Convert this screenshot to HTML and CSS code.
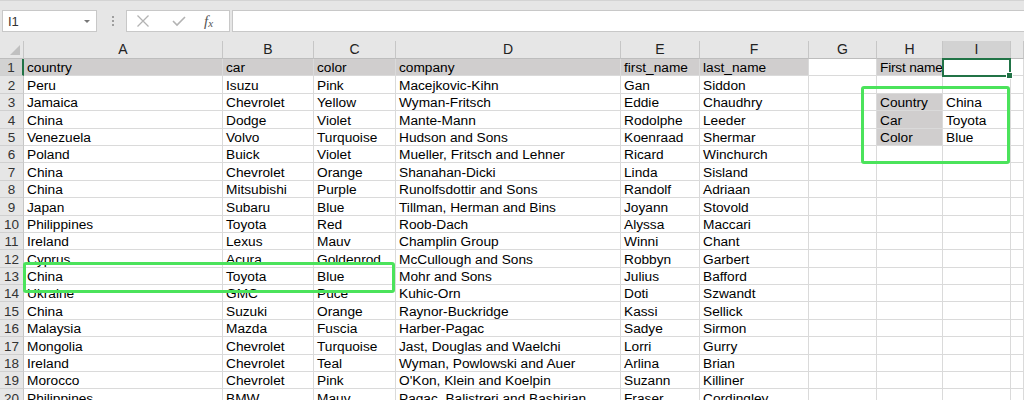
FILE: index.html
```html
<!DOCTYPE html>
<html>
<head>
<meta charset="utf-8">
<link rel="stylesheet" href="styles.css">
</head>
<body>
<div class="app">
  <div class="toolbar">
    <div class="namebox"><span class="ref">I1</span><span class="arrow"></span></div>
    <div class="grip"><i></i><i></i><i></i></div>
    <div class="fxbox">
      <svg class="ico ico-x" width="14" height="14" viewBox="0 0 14 14"><path d="M1.5 1.5 L12.5 12.5 M12.5 1.5 L1.5 12.5" stroke="#b3b3b3" stroke-width="1.3" fill="none"/></svg>
      <svg class="ico ico-ok" width="16" height="14" viewBox="0 0 16 14"><path d="M2 7 L6 11 L14 3" stroke="#b3b3b3" stroke-width="1.6" fill="none"/></svg>
      <span class="fx">f<sub>x</sub></span>
    </div>
    <div class="formula"></div>
  </div>

  <div class="sheet">
    <div class="row head">
      <div class="rh corner"><span class="tri"></span></div>
      <div class="ch">A</div><div class="ch">B</div><div class="ch">C</div><div class="ch">D</div><div class="ch">E</div><div class="ch">F</div><div class="ch">G</div><div class="ch">H</div><div class="ch sel">I</div><div class="ch"></div>
    </div>
    <div class="row">
      <div class="rh selrow">1</div>
      <div class="c g">country</div><div class="c g">car</div><div class="c g">color</div><div class="c g">company</div><div class="c g">first_name</div><div class="c g">last_name</div><div class="c"></div><div class="c g tight">First name</div><div class="c"></div><div class="c"></div>
    </div>
    <div class="row">
      <div class="rh">2</div>
      <div class="c">Peru</div><div class="c">Isuzu</div><div class="c">Pink</div><div class="c">Macejkovic-Kihn</div><div class="c">Gan</div><div class="c">Siddon</div><div class="c"></div><div class="c"></div><div class="c"></div><div class="c"></div>
    </div>
    <div class="row">
      <div class="rh">3</div>
      <div class="c">Jamaica</div><div class="c">Chevrolet</div><div class="c">Yellow</div><div class="c">Wyman-Fritsch</div><div class="c">Eddie</div><div class="c">Chaudhry</div><div class="c"></div><div class="c g">Country</div><div class="c">China</div><div class="c"></div>
    </div>
    <div class="row">
      <div class="rh">4</div>
      <div class="c">China</div><div class="c">Dodge</div><div class="c">Violet</div><div class="c">Mante-Mann</div><div class="c">Rodolphe</div><div class="c">Leeder</div><div class="c"></div><div class="c g">Car</div><div class="c">Toyota</div><div class="c"></div>
    </div>
    <div class="row">
      <div class="rh">5</div>
      <div class="c">Venezuela</div><div class="c">Volvo</div><div class="c">Turquoise</div><div class="c">Hudson and Sons</div><div class="c">Koenraad</div><div class="c">Shermar</div><div class="c"></div><div class="c g">Color</div><div class="c">Blue</div><div class="c"></div>
    </div>
    <div class="row">
      <div class="rh">6</div>
      <div class="c">Poland</div><div class="c">Buick</div><div class="c">Violet</div><div class="c">Mueller, Fritsch and Lehner</div><div class="c">Ricard</div><div class="c">Winchurch</div><div class="c"></div><div class="c"></div><div class="c"></div><div class="c"></div>
    </div>
    <div class="row">
      <div class="rh">7</div>
      <div class="c">China</div><div class="c">Chevrolet</div><div class="c">Orange</div><div class="c">Shanahan-Dicki</div><div class="c">Linda</div><div class="c">Sisland</div><div class="c"></div><div class="c"></div><div class="c"></div><div class="c"></div>
    </div>
    <div class="row">
      <div class="rh">8</div>
      <div class="c">China</div><div class="c">Mitsubishi</div><div class="c">Purple</div><div class="c">Runolfsdottir and Sons</div><div class="c">Randolf</div><div class="c">Adriaan</div><div class="c"></div><div class="c"></div><div class="c"></div><div class="c"></div>
    </div>
    <div class="row">
      <div class="rh">9</div>
      <div class="c">Japan</div><div class="c">Subaru</div><div class="c">Blue</div><div class="c">Tillman, Herman and Bins</div><div class="c">Joyann</div><div class="c">Stovold</div><div class="c"></div><div class="c"></div><div class="c"></div><div class="c"></div>
    </div>
    <div class="row">
      <div class="rh">10</div>
      <div class="c">Philippines</div><div class="c">Toyota</div><div class="c">Red</div><div class="c">Roob-Dach</div><div class="c">Alyssa</div><div class="c">Maccari</div><div class="c"></div><div class="c"></div><div class="c"></div><div class="c"></div>
    </div>
    <div class="row">
      <div class="rh">11</div>
      <div class="c">Ireland</div><div class="c">Lexus</div><div class="c">Mauv</div><div class="c">Champlin Group</div><div class="c">Winni</div><div class="c">Chant</div><div class="c"></div><div class="c"></div><div class="c"></div><div class="c"></div>
    </div>
    <div class="row">
      <div class="rh">12</div>
      <div class="c">Cyprus</div><div class="c">Acura</div><div class="c">Goldenrod</div><div class="c">McCullough and Sons</div><div class="c">Robbyn</div><div class="c">Garbert</div><div class="c"></div><div class="c"></div><div class="c"></div><div class="c"></div>
    </div>
    <div class="row">
      <div class="rh">13</div>
      <div class="c">China</div><div class="c">Toyota</div><div class="c">Blue</div><div class="c">Mohr and Sons</div><div class="c">Julius</div><div class="c">Bafford</div><div class="c"></div><div class="c"></div><div class="c"></div><div class="c"></div>
    </div>
    <div class="row">
      <div class="rh">14</div>
      <div class="c">Ukraine</div><div class="c">GMC</div><div class="c">Puce</div><div class="c">Kuhic-Orn</div><div class="c">Doti</div><div class="c">Szwandt</div><div class="c"></div><div class="c"></div><div class="c"></div><div class="c"></div>
    </div>
    <div class="row">
      <div class="rh">15</div>
      <div class="c">China</div><div class="c">Suzuki</div><div class="c">Orange</div><div class="c">Raynor-Buckridge</div><div class="c">Kassi</div><div class="c">Sellick</div><div class="c"></div><div class="c"></div><div class="c"></div><div class="c"></div>
    </div>
    <div class="row">
      <div class="rh">16</div>
      <div class="c">Malaysia</div><div class="c">Mazda</div><div class="c">Fuscia</div><div class="c">Harber-Pagac</div><div class="c">Sadye</div><div class="c">Sirmon</div><div class="c"></div><div class="c"></div><div class="c"></div><div class="c"></div>
    </div>
    <div class="row">
      <div class="rh">17</div>
      <div class="c">Mongolia</div><div class="c">Chevrolet</div><div class="c">Turquoise</div><div class="c">Jast, Douglas and Waelchi</div><div class="c">Lorri</div><div class="c">Gurry</div><div class="c"></div><div class="c"></div><div class="c"></div><div class="c"></div>
    </div>
    <div class="row">
      <div class="rh">18</div>
      <div class="c">Ireland</div><div class="c">Chevrolet</div><div class="c">Teal</div><div class="c">Wyman, Powlowski and Auer</div><div class="c">Arlina</div><div class="c">Brian</div><div class="c"></div><div class="c"></div><div class="c"></div><div class="c"></div>
    </div>
    <div class="row">
      <div class="rh">19</div>
      <div class="c">Morocco</div><div class="c">Chevrolet</div><div class="c">Pink</div><div class="c">O'Kon, Klein and Koelpin</div><div class="c">Suzann</div><div class="c">Killiner</div><div class="c"></div><div class="c"></div><div class="c"></div><div class="c"></div>
    </div>
    <div class="row">
      <div class="rh">20</div>
      <div class="c">Philippines</div><div class="c">BMW</div><div class="c">Mauv</div><div class="c">Pagac, Balistreri and Bashirian</div><div class="c">Fraser</div><div class="c">Cordingley</div><div class="c"></div><div class="c"></div><div class="c"></div><div class="c"></div>
    </div>

    <div class="selection"><span class="handle"></span></div>
    <div class="mark mark-lookup"></div>
    <div class="mark mark-row"></div>
  </div>
</div>
</body>
</html>
```

FILE: styles.css
```css
html, body {
  margin: 0;
  padding: 0;
  background: #ffffff;
  overflow: hidden;
}
.app {
  width: 1024px;
  height: 400px;
  overflow: hidden;
  font-family: "Liberation Sans", Arial, sans-serif;
  color: #000;
}

/* toolbar */
.toolbar {
  height: 41px;
  box-sizing: border-box;
  background: #e6e6e6;
  border-top: 1px solid #d4d4d4;
  padding: 9px 0 9px 2px;
  display: flex;
  align-items: stretch;
}
.namebox {
  width: 95px;
  box-sizing: border-box;
  background: #fff;
  border: 1px solid #c8c8c8;
  display: flex;
  align-items: center;
  justify-content: space-between;
  padding: 0 6px 0 5px;
  font-size: 13px;
  color: #333;
}
.arrow {
  width: 0;
  height: 0;
  border-left: 3px solid transparent;
  border-right: 3px solid transparent;
  border-top: 3px solid #777;
}
.grip {
  width: 29px;
  display: flex;
  flex-direction: column;
  align-items: center;
  justify-content: center;
  gap: 2px;
  padding-left: 2px;
  box-sizing: border-box;
}
.grip i {
  width: 2px;
  height: 2px;
  background: #9e9e9e;
  display: block;
}
.fxbox {
  width: 104px;
  box-sizing: border-box;
  background: #fff;
  border: 1px solid #c8c8c8;
  display: flex;
  align-items: center;
  padding: 0 0 0 9px;
}
.ico-x {
  margin-right: 21px;
}
.ico-ok {
  margin-right: 17px;
}
.fx {
  font-family: "Liberation Serif", "Times New Roman", serif;
  font-style: italic;
  font-size: 15px;
  color: #555;
  line-height: 1;
}
.fx sub {
  font-size: 11px;
  vertical-align: -1px;
}
.formula {
  flex: 1;
  margin-left: 2px;
  background: #fff;
  border-top: 1px solid #c8c8c8;
  border-bottom: 1px solid #c8c8c8;
  border-left: 1px solid #c8c8c8;
}

/* sheet */
.sheet {
  position: relative;
}
.row {
  display: grid;
  grid-template-columns: 24px 199px 91px 82px 225px 79px 109px 68px 66px 68px 1fr;
  height: 17.4px;
}
.row.head {
  height: 18px;
}
.c, .rh, .ch {
  box-sizing: border-box;
  border-right: 1px solid #dadada;
  border-bottom: 1px solid #dadada;
  white-space: nowrap;
  font-size: 13.7px;
  display: flex;
  align-items: flex-end;
  line-height: 15px;
  padding-bottom: 0;
}
.c {
  padding-left: 3px;
  overflow: visible;
}
.c.g {
  background: #d0cece;
}
.c.tight {
  letter-spacing: -0.2px;
}
.rh {
  background: #e6e6e6;
  border-right: 1px solid #c6c6c6;
  border-bottom: 1px solid #d0d0d0;
  justify-content: center;
  color: #333;
  font-size: 13.5px;
}
.rh.selrow {
  background: #d2d2d2;
  border-right: 2px solid #217346;
}
.ch {
  background: #e6e6e6;
  border-right: 1px solid #c6c6c6;
  border-bottom: 1px solid #bdbdbd;
  justify-content: center;
  color: #222;
  font-size: 14px;
  padding-bottom: 1px;
}
.ch.sel {
  background: #d2d2d2;
}
.rh.corner {
  position: relative;
  border-bottom: 1px solid #bdbdbd;
}
.tri {
  position: absolute;
  right: 3px;
  bottom: 3px;
  width: 0;
  height: 0;
  border-left: 10px solid transparent;
  border-bottom: 10px solid #c0c0c0;
}

/* overlays */
.selection {
  position: absolute;
  left: 942px;
  top: 17px;
  width: 69px;
  height: 19px;
  box-sizing: border-box;
  border: 2px solid #217346;
}
.handle {
  position: absolute;
  right: -4px;
  bottom: -4px;
  width: 5px;
  height: 5px;
  background: #217346;
  border: 1px solid #fff;
}
.mark {
  position: absolute;
  box-sizing: border-box;
  border: 3px solid #4be35b;
  border-radius: 3px;
}
.mark-lookup {
  left: 861px;
  top: 45px;
  width: 149px;
  height: 78px;
}
.mark-row {
  left: 23px;
  top: 221px;
  width: 372px;
  height: 31px;
}
```
